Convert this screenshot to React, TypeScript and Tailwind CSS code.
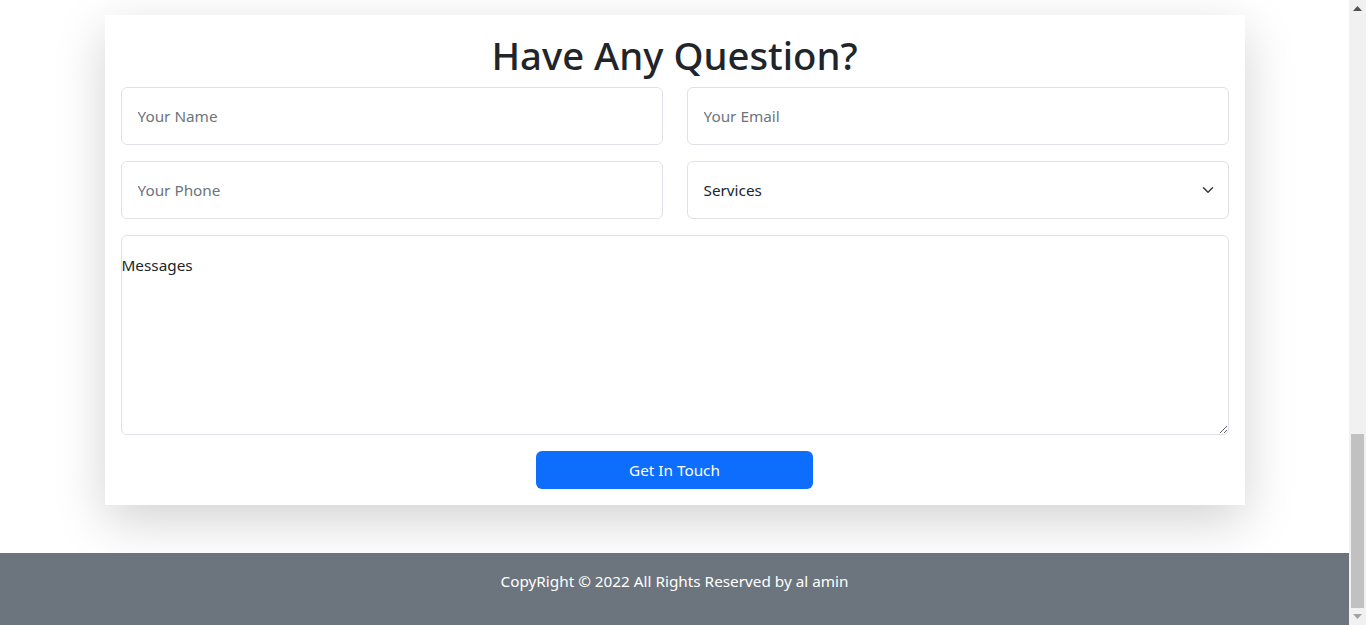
import React from "react";

const ScrollBar = () => {
  return (
    <div className="w-[17px] h-full bg-[#f1f1f1] flex flex-col items-center shrink-0">
      <div className="h-[17px] w-full flex items-center justify-center">
        <svg width="9" height="5" viewBox="0 0 9 5">
          <path d="M0 5 L4.5 0 L9 5 Z" fill="#505050" />
        </svg>
      </div>
      <div className="flex-1 w-full" />
      <div className="w-[13px] h-[174px] bg-[#c1c1c1]" />
      <div className="h-[17px] w-full flex items-center justify-center">
        <svg width="9" height="5" viewBox="0 0 9 5">
          <path d="M0 0 L9 0 L4.5 5 Z" fill="#a3a3a3" />
        </svg>
      </div>
    </div>
  );
};

const inputCls =
  "w-full h-[58px] border border-[#dee2e6] rounded-[6px] px-4 text-[15.3px] text-[#212529] placeholder:text-[#6c757d] bg-white outline-none";

const App = () => {
  return (
    <div
      className="h-[625px] w-full flex overflow-hidden bg-white"
      style={{ fontFamily: '"Noto Sans", "Open Sans", sans-serif' }}
    >
      <div className="flex-1 flex flex-col">
        <div className="pt-[15px]">
          <div className="w-[1140px] mx-auto bg-white shadow-[0_16px_48px_rgba(0,0,0,0.175)] px-4 pt-4 pb-4 flex flex-col">
            <h1 className="text-[38.3px] leading-[48px] font-medium text-[#212529] text-center mb-2">
              Have Any Question?
            </h1>
            <div className="grid grid-cols-2 gap-x-6 gap-y-4">
              <input className={inputCls} placeholder="Your Name" />
              <input className={inputCls} placeholder="Your Email" />
              <input className={inputCls} placeholder="Your Phone" />
              <div className="relative">
                <select className={inputCls + " appearance-none"} defaultValue="Services">
                  <option>Services</option>
                  <option>Web Design</option>
                  <option>Development</option>
                </select>
                <svg
                  className="absolute right-[15px] top-1/2 -translate-y-1/2 pointer-events-none"
                  width="12"
                  height="12"
                  viewBox="0 0 16 16"
                >
                  <path
                    d="m2 5 6 6 6-6"
                    fill="none"
                    stroke="#343a40"
                    strokeWidth="2"
                    strokeLinecap="round"
                    strokeLinejoin="round"
                  />
                </svg>
              </div>
            </div>
            <textarea
              className="mt-4 w-full h-[200px] border border-[#dee2e6] rounded-[6px] pt-[18px] pl-0 text-[15.3px] text-[#212529] placeholder:text-[#212529] outline-none"
              placeholder="Messages"
            />
            <div className="flex justify-center mt-4">
              <button className="w-1/4 h-[38px] bg-[#0d6efd] text-white text-[15.3px] rounded-[6px]">
                Get In Touch
              </button>
            </div>
          </div>
        </div>
        <footer className="mt-12 flex-1 bg-[#6c757d] pt-4">
          <p className="text-center text-white text-[15.3px] leading-6">
            CopyRight © 2022 All Rights Reserved by al amin
          </p>
        </footer>
      </div>
      <ScrollBar />
    </div>
  );
};

export default App;
